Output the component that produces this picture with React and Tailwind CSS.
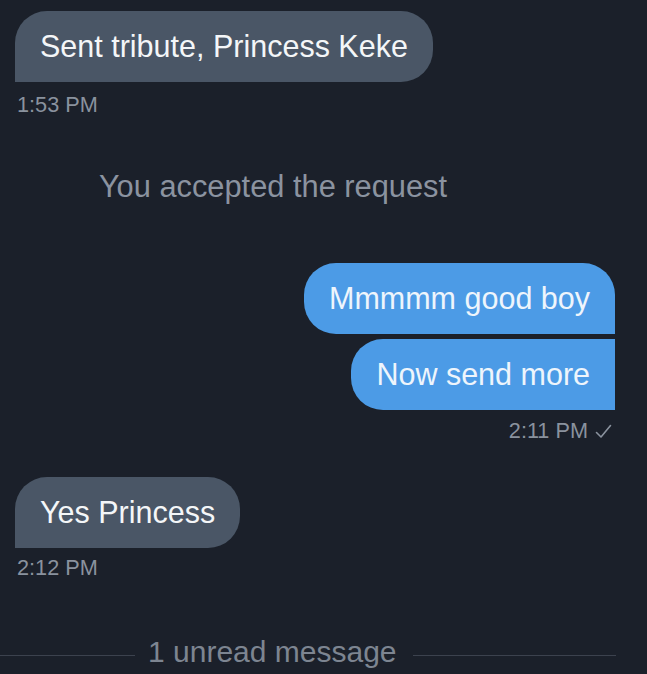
export default function App() {
  return (
    <div
      className="w-[647px] h-[674px] overflow-hidden bg-[#1b202a] flex flex-col"
      style={{ fontFamily: '"Liberation Sans", Arial, sans-serif' }}
    >
      {/* incoming */}
      <div className="mt-[11px] ml-[15px] self-start h-[71px] px-[25px] flex items-center rounded-tl-[32px] rounded-tr-[32px] rounded-br-[32px] bg-[#4a5666] text-[30.5px] text-[#f4f6f8] whitespace-nowrap">
        Sent tribute, Princess Keke
      </div>
      <div className="mt-[11px] ml-[17px] text-[21.7px] leading-[24px] text-[#8a929e]">1:53 PM</div>

      {/* system */}
      <div className="mt-[52px] w-[546px] text-center text-[30.8px] leading-[36px] text-[#8b93a0] whitespace-nowrap">
        You accepted the request
      </div>

      {/* outgoing */}
      <div className="mt-[58px] mr-[32px] self-end h-[71px] px-[25px] flex items-center rounded-tl-[32px] rounded-tr-[32px] rounded-bl-[32px] bg-[#4c9be6] text-[30.5px] text-[#eef5fc] whitespace-nowrap">
        Mmmmm good boy
      </div>
      <div className="mt-[5px] mr-[32px] self-end h-[71px] px-[25px] flex items-center rounded-tl-[32px] rounded-bl-[32px] bg-[#4c9be6] text-[30.5px] text-[#eef5fc] whitespace-nowrap">
        Now send more
      </div>
      <div className="mt-[9px] mr-[35px] self-end flex items-center gap-[7px] text-[21.7px] leading-[24px] text-[#8a929e]">
        <span>2:11 PM</span>
        <svg width="17" height="15" viewBox="0 0 17 15" fill="none">
          <path d="M1.5 8.5 L6 13 L15.5 1.5" stroke="#8a929e" strokeWidth="1.6" strokeLinecap="round" strokeLinejoin="round" />
        </svg>
      </div>

      {/* incoming */}
      <div className="mt-[34px] ml-[15px] self-start h-[71px] px-[25px] flex items-center rounded-tl-[32px] rounded-tr-[32px] rounded-br-[32px] bg-[#4a5666] text-[30.5px] text-[#f4f6f8] whitespace-nowrap">
        Yes Princess
      </div>
      <div className="mt-[8px] ml-[17px] text-[21.7px] leading-[24px] text-[#8a929e]">2:12 PM</div>

      {/* unread divider */}
      <div className="mt-[54px] flex items-center">
        <div className="w-[135px] h-px bg-[#3c424e] mt-[6px]" />
        <div className="ml-[13px] mr-[16px] text-[30px] leading-[36px] text-[#7d8591] whitespace-nowrap">1 unread message</div>
        <div className="w-[203px] h-px bg-[#3c424e] mt-[6px]" />
      </div>
    </div>
  );
}
